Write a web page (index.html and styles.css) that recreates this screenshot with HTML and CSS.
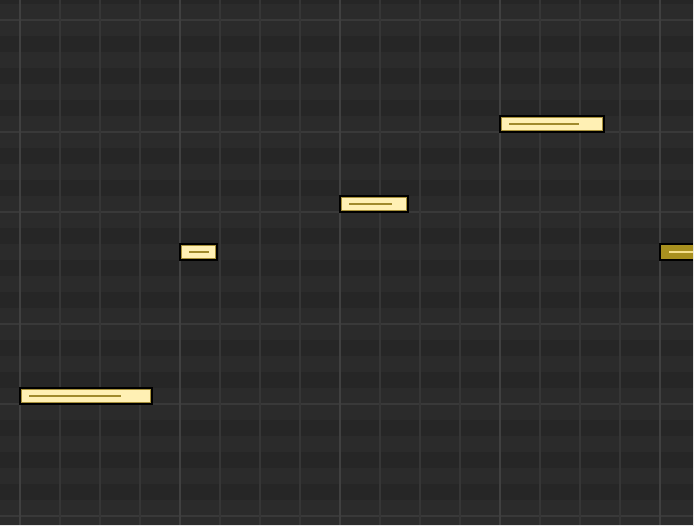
FILE: index.html
```html
<!DOCTYPE html>
<html lang="en">
<head>
    <meta charset="UTF-8">
    <meta name="viewport" content="width=device-width, initial-scale=1.0">
    <title>Piano Roll</title>
    <link rel="stylesheet" href="styles.css">
</head>
<body>
    <!-- Note grid: rows are pitches, columns are beats -->
    <div class="roll">
        <div class="note" style="left: 19px; top: 387px; width: 134px;"><div class="vel" style="width: 92px;"></div></div>
        <div class="note" style="left: 179px; top: 243px; width: 39px;"><div class="vel" style="width: 20px;"></div></div>
        <div class="note" style="left: 339px; top: 195px; width: 70px;"><div class="vel" style="width: 43px;"></div></div>
        <div class="note" style="left: 499px; top: 115px; width: 106px;"><div class="vel" style="width: 70px;"></div></div>
        <div class="note selected" style="left: 659px; top: 243px; width: 60px;"><div class="vel" style="width: 40px;"></div></div>
    </div>
</body>
</html>
```

FILE: styles.css
```css
body {
    margin: 0;
    padding: 0;
    background-color: #e8e8e8;
    font-family: "Liberation Sans", Arial, sans-serif;
}
.roll {
    position: relative;
    width: 693px;
    height: 525px;
    overflow: hidden;
    background-color: #2b2b2b;
    background-image:
        /* bar lines */
        linear-gradient(to right, #404040 0 2px, transparent 2px),
        /* beat lines */
        linear-gradient(to right, #363636 0 2px, transparent 2px),
        /* octave and E/F lines */
        linear-gradient(to bottom,
            #393939 0 2px, transparent 2px 112px,
            #393939 112px 114px, transparent 114px),
        /* black key rows */
        linear-gradient(to bottom,
            #2b2b2b 0 16px, #262626 16px 32px,
            #2b2b2b 32px 48px, #262626 48px 64px,
            #2b2b2b 64px 80px, #262626 80px 96px,
            #2b2b2b 96px 128px, #262626 128px 144px,
            #2b2b2b 144px 160px, #262626 160px 176px,
            #2b2b2b 176px 192px);
    background-size: 160px 100%, 40px 100%, 100% 192px, 100% 192px;
    background-position: 19px 0, 19px 0, 0 19px, 0 20px;
}
.note {
    position: absolute;
    height: 18px;
    box-sizing: border-box;
    border: 2px solid #000;
    background: #fff0b4;
    box-shadow: inset 0 0 0 1px #a8913a;
    display: flex;
    align-items: center;
}
.note .vel {
    height: 2px;
    margin-left: 8px;
    background: #a08a2c;
}
.note.selected {
    background: #a8901f;
    box-shadow: none;
}
.note.selected .vel {
    background: #f5e08c;
}
```
